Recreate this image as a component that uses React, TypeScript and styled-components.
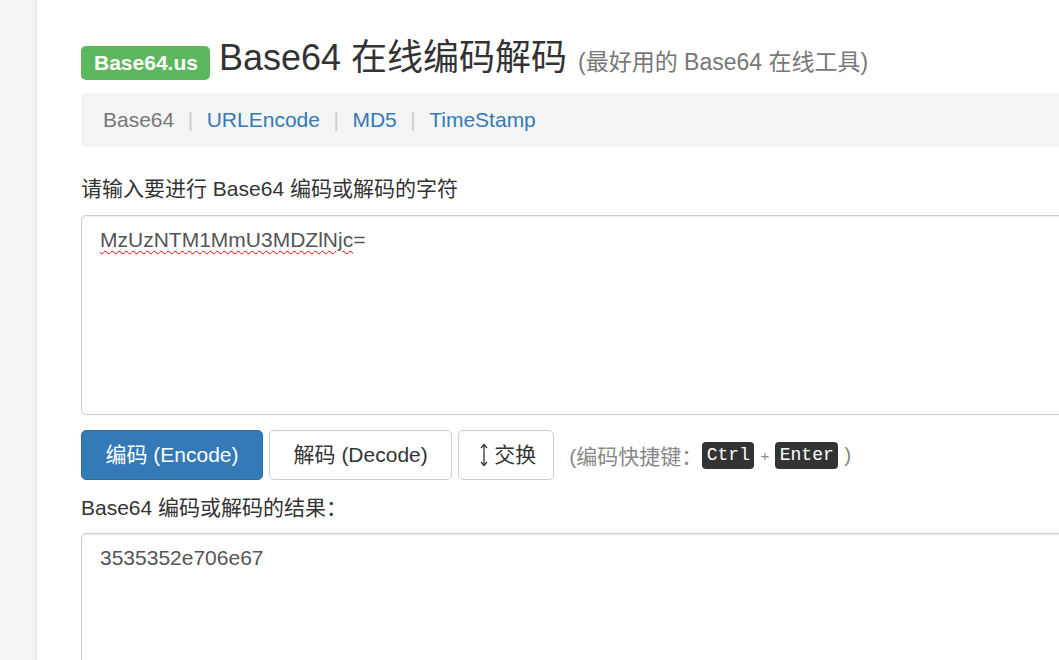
import React from "react";
import styled, { createGlobalStyle } from "styled-components";

const Global = createGlobalStyle`
  html, body { margin: 0; padding: 0; background: #fff; overflow: hidden; }
  body {
    font-family: "Liberation Sans", "Noto Sans CJK SC", sans-serif;
    font-size: 21px;
    color: #333;
  }
  * { box-sizing: border-box; }
`;

const Page = styled.div`
  display: flex;
  width: 1059px;
  height: 660px;
  overflow: hidden;
`;

const Sidebar = styled.div`
  flex: 0 0 37px;
  background: #f4f4f4;
  border-right: 1px solid #e6e6e6;
`;

const Main = styled.main`
  flex: 0 0 auto;
  width: 1080px;
  padding: 38px 0 0 44px;
`;

const TitleRow = styled.h1`
  display: flex;
  align-items: baseline;
  margin: 0 0 11px;
  font-size: 36px;
  font-weight: 400;
  line-height: 40px;
  color: #333;
`;

const Badge = styled.span`
  display: inline-block;
  background: #5cb85c;
  color: #fff;
  font-size: 21px;
  font-weight: 700;
  line-height: 20px;
  padding: 7px 12px 7px 13px;
  border-radius: 5px;
  margin-right: 9px;
`;

const Sub = styled.small`
  font-size: 23px;
  color: #777;
  margin-left: 11px;
`;

const Crumbs = styled.nav`
  display: flex;
  align-items: center;
  height: 54px;
  padding: 0 22px;
  background: #f4f4f4;
  border-radius: 5px;
  font-size: 21px;
`;

const Crumb = styled.a<{ $active?: boolean }>`
  color: ${(p) => (p.$active ? "#777" : "#337ab7")};
  text-decoration: none;
`;

const Sep = styled.span`
  color: #ccc;
  margin: 0 13.5px;
`;

const Label = styled.div`
  margin: 27px 0 11px;
  line-height: 30px;
  font-size: 21px;
  color: #333;
`;

const Box = styled.div<{ $h: number }>`
  height: ${(p) => p.$h}px;
  border: 1px solid #ccc;
  border-radius: 5px;
  box-shadow: inset 0 1px 1px rgba(0, 0, 0, 0.075);
  padding: 9px 18px;
  line-height: 30px;
  font-size: 21px;
  color: #555;
  background: #fff;
`;

const Misspelt = styled.span`
  text-decoration: underline wavy #e00;
  text-decoration-thickness: 1px;
  text-underline-offset: 3px;
`;

const Actions = styled.div`
  display: flex;
  align-items: center;
  gap: 6px;
  margin-top: 15px;
`;

const Btn = styled.button<{ $primary?: boolean }>`
  height: 50px;
  padding: 0 23.5px;
  border: 1px solid ${(p) => (p.$primary ? "#2e6da4" : "#ccc")};
  border-radius: 5px;
  background: ${(p) => (p.$primary ? "#337ab7" : "#fff")};
  color: ${(p) => (p.$primary ? "#fff" : "#333")};
  font-family: inherit;
  font-size: 21px;
  line-height: 30px;
  display: inline-flex;
  align-items: center;
  cursor: pointer;
`;

const SwapBtn = styled(Btn)`
  padding: 0 17px 0 20px;
  gap: 5px;
`;

const Hint = styled.span`
  margin-left: 9px;
  color: #888;
  font-size: 21px;
  display: inline-flex;
  align-items: center;
`;

const Kbd = styled.kbd`
  display: inline-block;
  background: #333;
  color: #fff;
  font-family: "Liberation Mono", "DejaVu Sans Mono", monospace;
  font-size: 18px;
  line-height: 20px;
  padding: 3.5px 4.5px;
  border-radius: 4px;
`;

const Plus = styled.span`
  font-size: 15px;
  margin: 0 6px;
  color: #888;
`;

const Close = styled.span`
  margin-left: 6px;
`;

const ResultLabel = styled(Label)`
  margin: 13px 0 10px;
`;

const SwapIcon = () => (
  <svg width="10" height="26" viewBox="0 0 10 26" aria-hidden="true">
    <path d="M5 2.5v21" stroke="#333" strokeWidth="1.3" fill="none" />
    <path d="M2 6 5 2.5 8 6" stroke="#333" strokeWidth="1.3" fill="none" />
    <path d="M2 20 5 23.5 8 20" stroke="#333" strokeWidth="1.3" fill="none" />
  </svg>
);

export default function App() {
  return (
    <>
      <Global />
      <Page>
        <Sidebar />
        <Main>
          <TitleRow>
            <Badge>Base64.us</Badge>
            Base64 在线编码解码
            <Sub>(最好用的 Base64 在线工具)</Sub>
          </TitleRow>
          <Crumbs>
            <Crumb $active>Base64</Crumb>
            <Sep>|</Sep>
            <Crumb href="#">URLEncode</Crumb>
            <Sep>|</Sep>
            <Crumb href="#">MD5</Crumb>
            <Sep>|</Sep>
            <Crumb href="#">TimeStamp</Crumb>
          </Crumbs>
          <Label>请输入要进行 Base64 编码或解码的字符</Label>
          <Box $h={200} role="textbox">
            <Misspelt>MzUzNTM1MmU3MDZlNjc</Misspelt>=
          </Box>
          <Actions>
            <Btn $primary>编码 (Encode)</Btn>
            <Btn>解码 (Decode)</Btn>
            <SwapBtn>
              <SwapIcon />
              交换
            </SwapBtn>
            <Hint>
              (编码快捷键：<Kbd>Ctrl</Kbd>
              <Plus>+</Plus>
              <Kbd>Enter</Kbd>
              <Close>)</Close>
            </Hint>
          </Actions>
          <ResultLabel>Base64 编码或解码的结果：</ResultLabel>
          <Box $h={200} role="textbox">
            3535352e706e67
          </Box>
        </Main>
      </Page>
    </>
  );
}
